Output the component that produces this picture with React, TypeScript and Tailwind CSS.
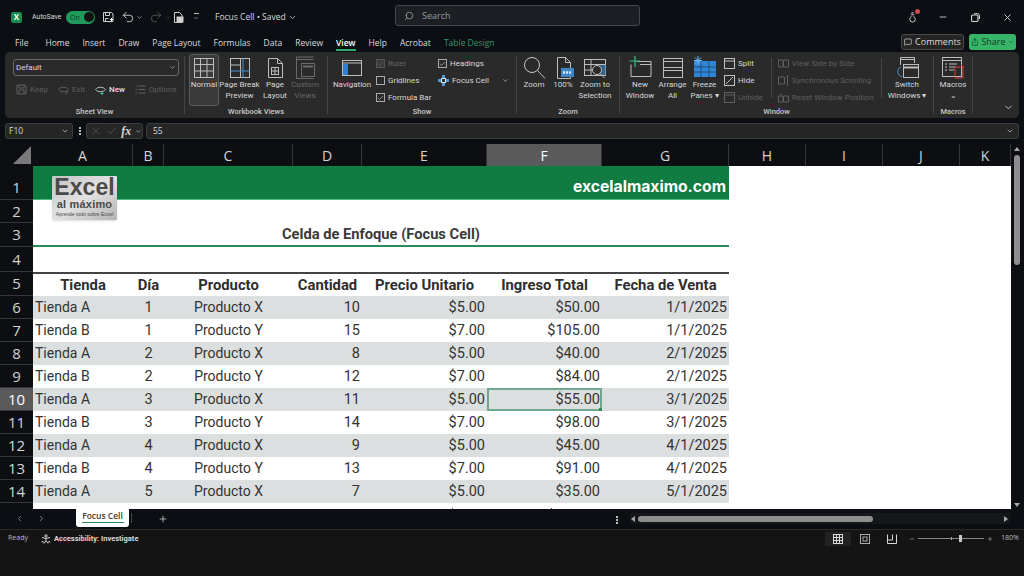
import type { ReactNode } from 'react';
import { Check, ChevronDown, ChevronLeft, ChevronRight, Lightbulb, MessageSquare, Minus, Plus, Redo2, Search, Share, Undo2, X } from 'lucide-react';

const gridCols = 'grid grid-cols-[100px_31px_129px_69px_125px_115px_127px_282px]';
const uiFont = "font-['Open_Sans','Noto_Sans',sans-serif]";
const cellFont = "font-['Roboto','Noto_Sans',sans-serif]";

const columns = [
  { name: 'A', w: 'w-[100px]' },
  { name: 'B', w: 'w-[31px]' },
  { name: 'C', w: 'w-[129px]' },
  { name: 'D', w: 'w-[69px]' },
  { name: 'E', w: 'w-[125px]' },
  { name: 'F', w: 'w-[115px]', active: true },
  { name: 'G', w: 'w-[127px]' },
  { name: 'H', w: 'w-[77px]' },
  { name: 'I', w: 'w-[77px]' },
  { name: 'J', w: 'w-[77px]' },
  { name: 'K', w: 'w-[51px]' },
];

const rows = [
  ['Tienda A', '1', 'Producto X', '10', '$5.00', '$50.00', '1/1/2025'],
  ['Tienda B', '1', 'Producto Y', '15', '$7.00', '$105.00', '1/1/2025'],
  ['Tienda A', '2', 'Producto X', '8', '$5.00', '$40.00', '2/1/2025'],
  ['Tienda B', '2', 'Producto Y', '12', '$7.00', '$84.00', '2/1/2025'],
  ['Tienda A', '3', 'Producto X', '11', '$5.00', '$55.00', '3/1/2025'],
  ['Tienda B', '3', 'Producto Y', '14', '$7.00', '$98.00', '3/1/2025'],
  ['Tienda A', '4', 'Producto X', '9', '$5.00', '$45.00', '4/1/2025'],
  ['Tienda B', '4', 'Producto Y', '13', '$7.00', '$91.00', '4/1/2025'],
  ['Tienda A', '5', 'Producto X', '7', '$5.00', '$35.00', '5/1/2025'],
];

const tabs = ['Home', 'Insert', 'Draw', 'Page Layout', 'Formulas', 'Data', 'Review', 'View', 'Help', 'Acrobat'];
const tableHeaders = ['Tienda', 'Día', 'Producto', 'Cantidad', 'Precio Unitario', 'Ingreso Total', 'Fecha de Venta'];

function RowNum({ n, active, low }: { n: number; active?: boolean; low?: boolean }) {
  return (
    <div className={`w-[33px] shrink-0 flex justify-center border-b border-[#34363a] text-[15px] ${uiFont} ${low ? 'items-end pb-[1px]' : 'items-center'} ${active ? 'bg-[#5a5a5a] text-white' : 'bg-[#0c0e12] text-[#d4d4d4]'}`}>
      {n}
    </div>
  );
}

function BigBtn({ label, line2, icon, w, dim }: { label: string; line2?: string; icon: ReactNode; w: string; dim?: boolean }) {
  return (
    <div className={`${w} shrink-0 flex flex-col items-center text-center leading-[11px] ${dim ? 'text-[#666]' : 'text-[#d8d8d8]'}`}>
      <div className="h-[26px] mt-[3px] mb-[-2px] flex items-center justify-center">{icon}</div>
      <span className="whitespace-nowrap">{label}</span>
      {line2 && <span className="whitespace-nowrap">{line2}</span>}
    </div>
  );
}

function Group({ w, label, children }: { w: string; label: string; children: ReactNode }) {
  return (
    <>
      <div className={`${w} shrink-0 flex flex-col h-full`}>
        <div className="flex-1 flex min-h-0">{children}</div>
        <div className="h-[13px] shrink-0 text-center text-[7.5px] font-medium text-[#c8c8c8] leading-[14px]">{label}</div>
      </div>
      <div className="w-px my-[4px] bg-[#444] shrink-0" />
    </>
  );
}

function CheckRow({ label, checked, dim }: { label: string; checked?: boolean; dim?: boolean }) {
  return (
    <div className={`flex items-center gap-[3px] h-[17px] shrink-0 ${dim ? 'text-[#666]' : 'text-[#d8d8d8]'}`}>
      <span className={`w-[9px] h-[9px] border flex items-center justify-center ${dim ? 'border-[#555] bg-[#3a3a3a]' : 'border-[#aaa]'}`}>
        {checked && <Check size={8} strokeWidth={2} />}
      </span>
      <span className="whitespace-nowrap">{label}</span>
    </div>
  );
}

function SmallRow({ icon, label, dim, bold }: { icon: ReactNode; label: string; dim?: boolean; bold?: boolean }) {
  return (
    <div className={`flex items-center gap-[3px] h-[17px] shrink-0 whitespace-nowrap ${dim ? 'text-[#5f5f5f]' : 'text-[#d8d8d8]'} ${bold ? 'font-semibold' : ''}`}>
      {icon}
      <span>{label}</span>
    </div>
  );
}

const box = (children: ReactNode, w = 24, h = 24) => (
  <svg width={w} height={h} viewBox={`0 0 ${w} ${h}`} fill="none" stroke="#bdbdbd" strokeWidth="1">
    {children}
  </svg>
);

const iconNormal = box(
  <>
    <rect x="2.5" y="2.5" width="19" height="19" />
    <path d="M2.5 8.5h19M2.5 15h19M8.5 2.5v19M15 2.5v19" />
  </>,
);
const iconPageBreak = box(
  <>
    <rect x="2.5" y="2.5" width="19" height="19" />
    <path d="M2.5 9h10M12.5 2.5v19" />
    <path d="M2.5 15h19M15 2.5v19" stroke="#4a90c8" />
  </>,
);
const iconPageLayout = box(
  <>
    <path d="M5.5 2.5h9l5 5v14h-14z" />
    <path d="M14.5 2.5v5h5" />
    <rect x="8.5" y="11.5" width="7" height="7" />
    <path d="M8.5 15h7M12 11.5v7" />
  </>,
);
const iconCustom = (
  <svg width="24" height="24" viewBox="0 0 24 24" fill="none" stroke="#6a6a6a">
    <path d="M3.5 1v22M20.5 1h-17M3.5 3.5h17M3.5 22.5h17" />
    <rect x="8.5" y="7.5" width="13" height="13" />
    <path d="M10 10.5h10" strokeWidth="2" />
  </svg>
);
const iconNav = box(
  <>
    <rect x="2.5" y="4.5" width="19" height="15" />
    <path d="M2.5 7h19" />
    <rect x="3" y="8" width="5" height="11" fill="#2f80d0" stroke="none" />
  </>,
);
const iconZoom = (
  <svg width="24" height="24" viewBox="0 0 24 24" fill="none" stroke="#c8c8c8" strokeWidth="1">
    <circle cx="10" cy="9" r="7.5" />
    <path d="M15.5 14.5l7.5 8" />
  </svg>
);
const icon100 = box(
  <>
    <path d="M6.5 1.5h8l5 5v16h-13z" />
    <path d="M14.5 1.5v5h5" />
    <rect x="10" y="12" width="13" height="9" fill="#3f88c5" stroke="none" />
    <path d="M12 16.5h9" stroke="#d7e8f5" strokeDasharray="2 1" strokeWidth="2.5" />
  </>,
);
const iconZoomSel = box(
  <>
    <rect x="1.5" y="3.5" width="21" height="16" />
    <path d="M1.5 8.5h21M8 3.5v16M1.5 14h8" />
    <rect x="14" y="9" width="9" height="10" fill="#3f88c5" fillOpacity="0.6" stroke="none" />
    <circle cx="14" cy="14" r="4.5" fill="#2a2a2a" />
    <path d="M17 17.5l4.5 4.5" />
  </>,
);
const iconNewWin = box(
  <>
    <path d="M9 5.5h14v15h-20v-12" />
    <path d="M12 8.5h11" />
    <path d="M7 0v11M1.5 5h11" stroke="#35c08a" strokeWidth="1.2" />
  </>,
);
const iconArrange = box(
  <>
    <rect x="2.5" y="2.5" width="19" height="19" />
    <path d="M2.5 5.5h19M2.5 11.5h19M2.5 14.5h19" />
  </>,
);
const iconFreeze = (
  <svg width="24" height="24" viewBox="0 0 24 24" fill="none">
    <rect x="1" y="5" width="22" height="16" fill="#2f86d6" />
    <path d="M1 11h22M1 16h22M8 5v16M16 5v16" stroke="#1d4f7c" />
    <path d="M5 0v9M1 4.5h8M2 1.5l6 6M8 1.5l-6 6" stroke="#6ab6f2" />
  </svg>
);
const iconSwitch = box(
  <>
    <path d="M5.5 9V1.5h14V7" />
    <path d="M5.5 3.5h14" />
    <rect x="8.5" y="8.5" width="15" height="13" />
    <path d="M8.5 11.5h15" strokeWidth="2" />
    <path d="M6 11a5 5 0 0 0-2 8l3 2" stroke="#4a90c8" />
  </>,
);
const iconMacros = box(
  <>
    <rect x="1.5" y="1.5" width="19" height="19" />
    <path d="M1.5 4.5h19M4 8h2M8 8h8M4 11h2M8 11h6M4 14h2M8 14h5" />
    <path d="M14 11h8v11h-8z" stroke="#d8413c" />
    <path d="M20 9l3 2" stroke="#d8413c" />
  </>,
);

const sm = (children: ReactNode, color = '#c0c0c0') => (
  <svg width="11" height="11" viewBox="0 0 11 11" fill="none" stroke={color} className="shrink-0">
    {children}
  </svg>
);

export default function App() {
  return (
    <div className={`relative w-[1024px] h-[576px] overflow-hidden bg-[#0b0e13] flex flex-col text-[8.5px] ${uiFont}`}>
      {/* Barre de titre */}
      <div className="h-[34px] shrink-0 flex items-center relative text-[#d8d8d8]">
        <div className="ml-[11px] w-[11px] h-[11px] rounded-[2px] bg-[#1a8a4c] flex items-center justify-center text-white text-[8px] font-bold leading-none">X</div>
        <span className="ml-[10px] w-[29px] text-[7px] font-['Roboto',sans-serif] whitespace-nowrap">AutoSave</span>
        <div className="ml-[5px] w-[29px] h-[13px] rounded-full bg-[#1f9a5c] flex items-center justify-between pl-[4px] pr-[1px]">
          <span className="text-[7px] text-[#0b3d24] leading-none">On</span>
          <span className="w-[10px] h-[10px] rounded-full bg-[#111]" />
        </div>
        <svg className="ml-[7px]" width="12" height="12" viewBox="0 0 12 12" fill="none" stroke="#d0d0d0">
          <path d="M1.500 1.500h8l1.500 1.500v7.500h-9.500zM3.500 1.500v3h4v-3M3.500 10.500v-3h3" />
          <path d="M8 8.500h3M9.500 7v3" stroke="#fff" />
        </svg>
        <Undo2 className="ml-[7px]" size={14} strokeWidth={1.5} />
        <ChevronDown className="ml-[1px]" size={7} />
        <Redo2 className="ml-[6px] text-[#555]" size={14} strokeWidth={1.5} />
        <ChevronDown className="ml-[1px] text-[#555]" size={7} />
        <svg className="ml-[1px]" width="12" height="13" viewBox="0 0 12 13" fill="none" stroke="#d0d0d0">
          <path d="M2.500 1.500h5l2.500 2.500v7.500h-7.500z" />
          <rect x="5" y="6" width="6" height="5" fill="#d0d0d0" />
        </svg>
        <div className="ml-[9px] flex flex-col items-center gap-[1px]">
          <span className="w-[5px] h-px bg-[#bbb]" />
          <ChevronDown size={6} />
        </div>
        <span className="ml-[16px] text-[8.5px] whitespace-nowrap">Focus Cell • Saved</span>
        <ChevronDown className="ml-[2px]" size={9} />
        <div className="absolute left-[395px] top-[5px] w-[245px] h-[21px] rounded-[3px] border border-[#44474c] bg-[#1c1f23] flex items-center text-[#9a9a9a]">
          <Search className="ml-[8px] -scale-x-100" size={10} />
          <span className="ml-[8px] text-[9px]">Search</span>
        </div>
        <div className="ml-auto flex items-center pr-[11px]">
          <div className="relative">
            <Lightbulb size={11} className="rotate-180" />
            <span className="absolute -top-[3px] -right-[2px] w-[5px] h-[5px] rounded-full bg-[#d04848]" />
          </div>
          <Minus className="ml-[20px]" size={10} />
          <svg className="ml-[23px]" width="9" height="9" viewBox="0 0 9 9" fill="none" stroke="#d8d8d8">
            <rect x="0.500" y="2" width="6.500" height="6.500" rx="1.500" strokeWidth="1.200" />
            <path d="M3 0.700h3.500a2 2 0 0 1 2 2V6" />
          </svg>
          <X className="ml-[22px]" size={11} />
        </div>
      </div>

      {/* Onglets */}
      <div className="h-[18px] shrink-0 flex items-start text-[8.5px] text-[#dcdcdc] pt-[3px] relative">
        <span className="ml-[15px]">File</span>
        <div className="ml-[17px] flex gap-[13px]">
          {tabs.map((t) => (
            <span key={t} className={`relative whitespace-nowrap ${t === 'View' ? 'font-semibold text-white' : ''}`}>
              {t}
              {t === 'View' && <span className="absolute left-0 right-0 top-[12px] h-[2px] bg-[#2fae6e]" />}
            </span>
          ))}
          <span className="text-[#2f9a68] whitespace-nowrap">Table Design</span>
        </div>
        <div className="ml-auto flex gap-[5px] pr-[8px] -mt-[3px]">
          <div className="w-[63px] h-[16px] rounded-[3px] border border-[#4a4a4a] bg-[#242424] flex items-center justify-center gap-[3px] text-[9px]">
            <MessageSquare size={8} />
            Comments
          </div>
          <div className="w-[47px] h-[16px] rounded-[3px] bg-[#36b568] flex items-center justify-center gap-[2px] text-[9px] text-[#0f3a22]">
            <Share size={8} />
            Share
            <ChevronDown size={6} />
          </div>
        </div>
      </div>

      {/* Ruban */}
      <div className="h-[66px] shrink-0 mx-[5px] rounded-[5px] bg-[#2a2a2a] flex relative text-[8px] font-['Roboto',sans-serif]">
        <Group w="w-[179px]" label="Sheet View">
          <div className="flex flex-col pl-[8px] pt-[7px] w-full">
            <div className="w-[166px] h-[17px] shrink-0 rounded-[3px] border border-[#6a6a6a] flex items-center justify-between px-[2px] text-[#d8d8d8]">
              <span>Default</span>
              <ChevronDown size={7} />
            </div>
            <div className="flex items-center mt-[5px] h-[17px] shrink-0 pl-[3px] gap-[10px]">
              <SmallRow dim label="Keep" icon={sm(<path d="M1 1h8l1 1v8H1zM3 1v3h5V1M3 10V6h5v4" />, '#5f5f5f')} />
              <SmallRow dim label="Exit" icon={sm(<path d="M0.500 5.500c2-3 8-3 10 0-2 3-8 3-10 0zM7 7l3 3M10 7l-3 3" />, '#5f5f5f')} />
              <SmallRow bold label="New" icon={sm(<><path d="M0.500 5.500c2-3 8-3 10 0-2 3-8 3-10 0z" /><path d="M7 8v3M5.500 9.500h3" stroke="#35c08a" /></>)} />
              <SmallRow dim label="Options" icon={sm(<path d="M3.500 2h7M3.500 5.500h7M3.500 9h7M0.500 2h1.500M0.500 5.500h1.500M0.500 9h1.500" />, '#5f5f5f')} />
            </div>
          </div>
        </Group>
        <Group w="w-[142px]" label="Workbook Views">
          <div className="flex pl-[4px]">
            <div className="relative w-[30px] h-[52px] mt-[2px] rounded-[3px] border border-[#5c5c5c] bg-[#3a3a3a] shrink-0">
              <div className="absolute left-[-1px] top-[-3px]">
                <BigBtn w="w-[30px]" label="Normal" icon={iconNormal} />
              </div>
            </div>
            <BigBtn w="w-[41px]" label="Page Break" line2="Preview" icon={iconPageBreak} />
            <BigBtn w="w-[30px]" label="Page" line2="Layout" icon={iconPageLayout} />
            <BigBtn w="w-[30px]" dim label="Custom" line2="Views" icon={iconCustom} />
          </div>
        </Group>
        <Group w="w-[188px]" label="Show">
          <div className="w-[46px] pl-[2px]">
            <BigBtn w="w-[44px]" label="Navigation" icon={iconNav} />
          </div>
          <div className="flex flex-col pt-[3px] w-[62px] ml-[2px]">
            <CheckRow dim checked label="Ruler" />
            <CheckRow label="Gridlines" />
            <CheckRow checked label="Formula Bar" />
          </div>
          <div className="flex flex-col pt-[3px]">
            <CheckRow checked label="Headings" />
            <div className="flex items-center h-[17px] shrink-0 text-[#d8d8d8] gap-[3px]">
              <svg width="11" height="11" viewBox="0 0 11 11">
                <path d="M4 0h3v3h-3zM0 4h3v3h-3zM8 4h3v3h-3zM4 8h3v3h-3z" fill="#4a9ad8" />
                <rect x="3.500" y="3.500" width="4" height="4" fill="none" stroke="#d8e8f5" />
              </svg>
              <span className="whitespace-nowrap">Focus Cell</span>
              <ChevronDown className="ml-[10px]" size={7} />
            </div>
          </div>
        </Group>
        <Group w="w-[102px]" label="Zoom">
          <div className="flex pl-[2px]">
            <BigBtn w="w-[30px]" label="Zoom" icon={iconZoom} />
            <BigBtn w="w-[28px]" label="100%" icon={icon100} />
            <BigBtn w="w-[36px]" label="Zoom to" line2="Selection" icon={iconZoomSel} />
          </div>
        </Group>
        <Group w="w-[313px]" label="Window">
          <div className="flex pl-[4px]">
            <BigBtn w="w-[32px]" label="New" line2="Window" icon={iconNewWin} />
            <BigBtn w="w-[33px]" label="Arrange" line2="All" icon={iconArrange} />
            <BigBtn w="w-[31px]" label="Freeze" line2="Panes ▾" icon={iconFreeze} />
            <div className="flex flex-col pt-[3px] ml-[4px] w-[47px]">
              <SmallRow label="Split" icon={sm(<><rect x="0.500" y="0.500" width="10" height="10" /><path d="M0.500 3h10" /></>)} />
              <SmallRow label="Hide" icon={sm(<><rect x="0.500" y="0.500" width="10" height="10" /><path d="M2 9l7-7" /></>)} />
              <SmallRow dim label="Unhide" icon={sm(<><rect x="0.500" y="0.500" width="10" height="10" /><path d="M0.500 3h10" /></>, '#5f5f5f')} />
            </div>
            <div className="w-px my-[6px] h-[40px] bg-[#444] shrink-0" />
            <div className="flex flex-col pt-[3px] ml-[6px] w-[103px]">
              <SmallRow dim label="View Side by Side" icon={sm(<path d="M0.500 2h4.500v7H0.500zM5.500 2H10.500v7H5.500z" />, '#5f5f5f')} />
              <SmallRow dim label="Synchronous Scrolling" icon={sm(<path d="M0.500 2h6v7h-6zM8.500 1h2M9.500 1v9M8.500 10h2" />, '#5f5f5f')} />
              <SmallRow dim label="Reset Window Position" icon={sm(<path d="M0.500 4h4.500v6H0.500zM5.500 4H10.500v6H5.500zM2 1l1.500 2" />, '#5f5f5f')} />
            </div>
            <div className="w-px my-[6px] h-[40px] bg-[#444] shrink-0" />
            <BigBtn w="w-[50px]" label="Switch" line2="Windows ▾" icon={iconSwitch} />
          </div>
        </Group>
        <Group w="w-[38px]" label="Macros">
          <BigBtn w="w-[38px]" label="Macros" line2="⌄" icon={iconMacros} />
        </Group>
        <ChevronDown className="absolute right-[5px] bottom-[5px] text-[#c8c8c8]" size={11} />
      </div>

      {/* Barre de formule */}
      <div className="h-[16px] mt-[5px] shrink-0 flex items-stretch pl-[5px] pr-[5px] text-[8.5px] text-[#d8d8d8]">
        <div className="w-[68px] rounded-[3px] border border-[#3c3c3c] bg-[#262626] flex items-center justify-between px-[3px]">
          <span>F10</span>
          <ChevronDown size={8} />
        </div>
        <div className="w-[13px] flex flex-col items-center justify-center gap-[1px]">
          <span className="w-[2px] h-[2px] bg-[#bbb]" />
          <span className="w-[2px] h-[2px] bg-[#bbb]" />
          <span className="w-[2px] h-[2px] bg-[#bbb]" />
        </div>
        <div className="w-[57px] rounded-[3px] border border-[#3c3c3c] bg-[#262626] flex items-center pl-[3px] gap-[4px]">
          <X size={12} className="text-[#6a6a6a]" strokeWidth={1.2} />
          <Check size={12} className="text-[#6a6a6a]" strokeWidth={1.2} />
          <span className="font-['Liberation_Serif',serif] italic font-bold text-[12px] text-[#d8d8d8]">fx</span>
          <ChevronDown size={7} />
        </div>
        <div className="ml-[3px] flex-1 rounded-[3px] border border-[#3c3c3c] bg-[#262626] flex items-center justify-between pl-[6px] pr-[4px]">
          <span>55</span>
          <ChevronDown size={8} />
        </div>
      </div>

      {/* Feuille */}
      <div className="mt-[5px] h-[365px] shrink-0 flex">
        <div className="w-[1011px] shrink-0 flex flex-col">
          <div className={`h-[22px] shrink-0 flex bg-[#0c0e12] text-[14px] text-[#d4d4d4] ${uiFont}`}>
            <div className="w-[33px] flex items-end justify-end p-[2px]">
              <span className="w-0 h-0 border-l-[18px] border-l-transparent border-b-[18px] border-b-[#7a7a7a]" />
            </div>
            {columns.map((c) => (
              <div key={c.name} className={`${c.w} flex items-center justify-center border-r border-[#34363a] ${c.active ? 'bg-[#5a5a5a] text-white' : ''}`}>
                {c.name}
              </div>
            ))}
          </div>

          <div className={`flex-1 min-h-0 overflow-hidden ${cellFont} text-[#333] text-[14.5px]`}>
            <div className="flex h-[34px]">
              <RowNum n={1} low />
              <div className={`flex-1 ${gridCols}`}>
                <div className="col-span-7 bg-[#107c41] border-b border-[#4fb585] flex items-end justify-end pr-[3px] font-['Inter',sans-serif] font-bold text-[15.7px] text-white">excelalmaximo.com</div>
                <div className="bg-white" />
              </div>
            </div>
            <div className="flex h-[23px]">
              <RowNum n={2} />
              <div className="flex-1 bg-white" />
            </div>
            <div className="flex h-[24px]">
              <RowNum n={3} />
              <div className={`flex-1 ${gridCols} bg-white`}>
                <div className="col-span-7 border-b-2 border-[#2e8b5b] flex items-center justify-center font-bold text-[14.7px] text-[#3a3a3a]">Celda de Enfoque (Focus Cell)</div>
              </div>
            </div>
            <div className="flex h-[25px]">
              <RowNum n={4} />
              <div className="flex-1 bg-white" />
            </div>
            <div className="flex h-[24px]">
              <RowNum n={5} />
              <div className={`flex-1 ${gridCols} bg-white`}>
                {tableHeaders.map((h) => (
                  <div key={h} className="flex items-center justify-center border-y-2 border-[#444] font-bold text-[14.8px] text-[#2e2e2e] whitespace-nowrap">{h}</div>
                ))}
              </div>
            </div>
            {rows.map((r, i) => (
              <div key={i} className="flex h-[23px]">
                <RowNum n={i + 6} active={i === 4} />
                <div className={`flex-1 ${gridCols} bg-white`}>
                  {r.map((v, j) => (
                    <div
                      key={j}
                      className={`relative flex items-center ${i % 2 === 0 ? 'bg-[#dcdfe0]' : 'bg-white'} ${j === 0 ? 'pl-[2px] text-[14px]' : j === 2 ? 'justify-center text-[14px]' : j === 1 ? 'justify-center' : 'justify-end pr-[2px]'}`}
                    >
                      {v}
                      {i === 4 && j === 5 && (
                        <span className="absolute inset-0 border-2 border-[#6fa88c]">
                          <span className="absolute -right-[3px] -bottom-[3px] w-[4px] h-[4px] bg-[#2e8b5b]" />
                        </span>
                      )}
                    </div>
                  ))}
                </div>
              </div>
            ))}
            {/* Ligne 15 : seul le haut des $ dépasse */}
            <div className="flex h-[6px]">
              <div className="w-[33px] shrink-0 bg-[#0c0e12]" />
              <div className={`flex-1 ${gridCols} bg-white`}>
                <div className="col-start-5 flex items-end justify-end pr-[34px]">
                  <span className="w-px h-[1px] bg-[#555]" />
                </div>
                <div className="flex items-end justify-end pr-[50px]">
                  <span className="w-px h-[1px] bg-[#555]" />
                </div>
              </div>
            </div>
          </div>
        </div>

        {/* Défilement vertical */}
        <div className="flex-1 bg-[#0c0e12] flex flex-col items-center pt-[3px] pr-[1px]">
          <span className="w-0 h-0 border-x-[3px] border-x-transparent border-b-[4px] border-b-[#a8a8a8]" />
          <span className="w-[6px] h-[110px] mt-[4px] rounded-full bg-[#8e8e8e]" />
          <span className="mt-auto mb-[2px] w-0 h-0 border-x-[3px] border-x-transparent border-t-[4px] border-t-[#a8a8a8]" />
        </div>
      </div>

      {/* Onglets de feuilles */}
      <div className="h-[21px] shrink-0 flex items-start border-b border-[#2a2a2a] text-[#9a9a9a]">
        <ChevronLeft className="ml-[15px] mt-[5px]" size={9} />
        <ChevronRight className="ml-[13px] mt-[5px]" size={9} />
        <div className="ml-[30px] w-[53px] h-[18px] bg-white rounded-b-[3px] flex flex-col items-center pt-[1px] text-[8.5px] font-semibold text-[#3a3a3a] leading-[12px] whitespace-nowrap">
          Focus Cell
          <span className="w-[42px] h-px bg-[#2e8b5b]" />
        </div>
        <span className="ml-[2px] mt-[4px] w-px h-[10px] bg-[#444]" />
        <Plus className="ml-[26px] mt-[5px] text-[#c8c8c8]" size={10} />
        <div className="ml-[448px] mt-[7px] flex flex-col gap-[1px]">
          <span className="w-[2px] h-[2px] bg-[#bbb]" />
          <span className="w-[2px] h-[2px] bg-[#bbb]" />
          <span className="w-[2px] h-[2px] bg-[#bbb]" />
        </div>
        <div className="ml-[12px] mt-[4px] w-[380px] h-[11px] bg-[#14161a] flex items-center pl-[1px] pr-[2px]">
          <span className="w-0 h-0 border-y-[3px] border-y-transparent border-r-[4px] border-r-[#a8a8a8]" />
          <span className="ml-[3px] w-[235px] h-[6px] rounded-full bg-[#8e8e8e]" />
          <span className="ml-auto w-0 h-0 border-y-[3px] border-y-transparent border-l-[4px] border-l-[#a8a8a8]" />
        </div>
      </div>

      {/* Barre d'état */}
      <div className="flex-1 bg-[#141414] text-[7px] text-[#bdbdbd]">
        <div className="h-[17px] flex items-center">
          <span className="ml-[8px]">Ready</span>
          <svg className="ml-[13px]" width="10" height="10" viewBox="0 0 10 10" fill="none" stroke="#d0d0d0">
            <circle cx="5" cy="2" r="1.200" />
            <path d="M1 3.500l4 1 4-1M5 4.500v2M3 9.500l2-3 2 3M1 7l1.500 1.500M2.500 7L1 8.500M7.500 7L9 8.500M9 7L7.500 8.500" />
          </svg>
          <span className="ml-[3px] font-bold text-[#d8d8d8] whitespace-nowrap font-['Roboto',sans-serif] text-[7.5px]">Accessibility: Investigate</span>
          <div className="ml-auto flex items-center pr-[6px]">
            <div className="w-[26px] h-[14px] bg-[#222] flex items-center justify-center">
              <svg width="10" height="10" viewBox="0 0 10 10" fill="none" stroke="#d8d8d8">
                <rect x="0.500" y="0.500" width="9" height="9" />
                <path d="M3.500 0.500v9M6.500 0.500v9M0.500 3.500h9M0.500 6.500h9" />
              </svg>
            </div>
            <svg className="ml-[9px]" width="10" height="10" viewBox="0 0 10 10" fill="none" stroke="#a8a8a8">
              <rect x="0.500" y="0.500" width="9" height="9" />
              <rect x="3" y="3" width="4" height="4" />
            </svg>
            <svg className="ml-[17px]" width="10" height="10" viewBox="0 0 10 10" fill="none" stroke="#d8d8d8">
              <path d="M0.500 0.500v9h9v-9M5.500 0.500v5.500h-5" />
            </svg>
            <Minus className="ml-[12px]" size={6} />
            <div className="relative ml-[3px] w-[66px] h-px bg-[#888]">
              <span className="absolute left-[33px] -top-[1px] w-px h-[3px] bg-[#aaa]" />
              <span className="absolute left-[41px] -top-[3px] w-[3px] h-[7px] bg-[#c8c8c8]" />
            </div>
            <Plus className="ml-[3px]" size={6} />
            <span className="ml-[8px] w-[17px] text-right">180%</span>
          </div>
        </div>
      </div>

      {/* Logo */}
      <div className="absolute left-[52px] top-[176px] w-[65px] h-[44px] rounded-[1px] bg-gradient-to-br from-[#c4c4c4] via-[#e2e2e2] to-[#b4b4b4] flex flex-col items-center font-['Liberation_Sans',sans-serif] text-[#4a4a4a] leading-none shadow-sm">
        <span className="h-[22px] text-[23px] font-bold leading-[22px] tracking-[0.1px]">Excel</span>
        <span className="text-[11px] font-bold leading-[11px] tracking-[0.2px] mt-[1px]">al máximo</span>
        <span className="text-[5px] mt-[2px] whitespace-nowrap">Aprende todo sobre Excel</span>
      </div>
    </div>
  );
}
